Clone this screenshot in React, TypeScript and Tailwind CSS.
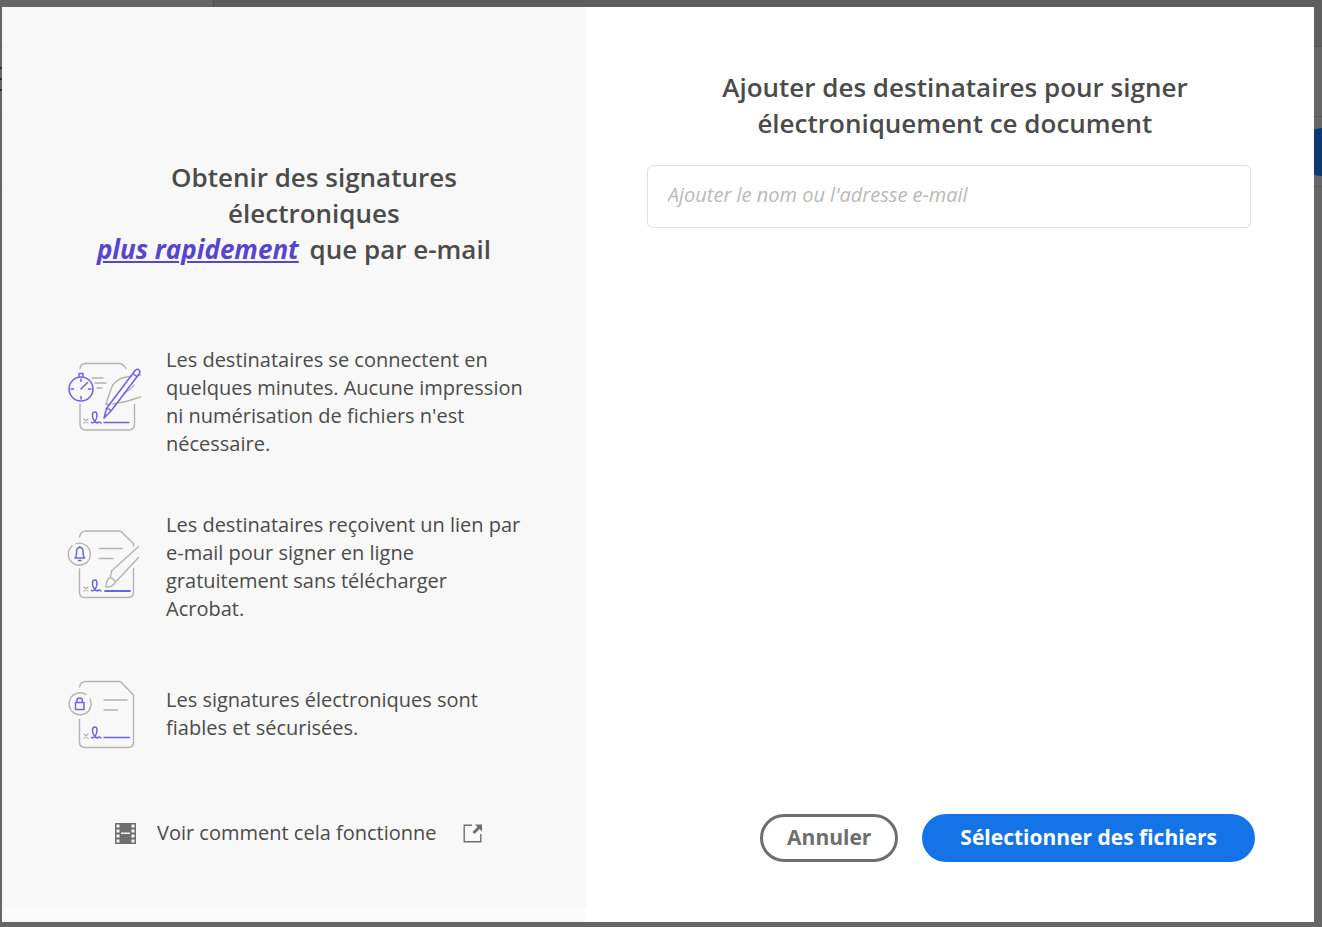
import React, { useState } from 'react'

const GRAY = '#b3b3b3'
const VIOLET = '#6a64e0'

function Signature() {
  return (
    <>
      <path d="M24 69l4 4M28 69l-4 4" stroke={GRAY} strokeWidth="1.200" />
      <path
        d="M31.500 72.500c3 1 5.500-3 5.500-7.500 0-4-4-4-4.500-.5-.5 3.500 2 8 5 8.500 1-1.500 2-1 3.500 0"
        stroke={VIOLET}
        strokeWidth="1.500"
      />
    </>
  )
}

function FastIcon() {
  return (
    <svg viewBox="4 14 80 76" className="h-[76px] w-20 shrink-0 overflow-visible" fill="none" strokeLinecap="round" strokeLinejoin="round" aria-hidden="true">
      <g stroke={GRAY} strokeWidth="1.400">
        <path d="M20 18.500q.5-5 6-5h33q4 0 7 5" />
        <path d="M20 54v20q0 6 6 6h42.500q6 0 6-6V54.500" />
        <path d="M32 28h11M35 33h11M37 38h5" />
        <path d="M46 54l5-15q3-8 11-11l10-2" />
        <path d="M46 54q2 1 3 0M53 54l13-2.500L80.500 47" />
        <path d="M64 43q7-3 10-8M77 25.500l3.500-.5" />
      </g>
      <g stroke={VIOLET} strokeWidth="1.500">
        <circle cx="21" cy="39" r="12" />
        <path d="M19 26.500v-3h4v3M21 29v2.500M21 46.500V49M11 39h2.500M28.500 39H31M21 39l6.500-6.500" />
        <path d="M46.500 58.500L75.500 20q2-1.500 3.500 0t.5 3.500L51 61l-7 7zM73.500 24l2.500 2M46.500 58.500q3 0 4.500 2.500" />
        <path d="M44 72.500h25" />
      </g>
      <Signature />
    </svg>
  )
}

function BellIcon() {
  return (
    <svg viewBox="4 9 80 76" className="h-[76px] w-20 shrink-0 overflow-visible" fill="none" strokeLinecap="round" strokeLinejoin="round" aria-hidden="true">
      <g stroke={GRAY} strokeWidth="1.400">
        <path d="M19.500 17q1-6 7-6h34L73.500 23.500V26" />
        <path d="M19.500 49v23q0 5.500 5.500 5.500h43q5.500 0 5.500-5.500V48.500" />
        <path d="M39 28.500h23M39 38.500h14" />
        <path d="M12 26A11 11 0 1 0 16 23.700" />
        <path d="M51.500 51L78.500 26.500M57.500 60L78.500 37.500" />
        <path d="M51.500 51l-1 6 5 4.500 2-1.500M50.500 57.500q-4 1-4.500 9.500 8 0 9.500-5.500" />
      </g>
      <g stroke={VIOLET} strokeWidth="1.500">
        <path d="M15 38q1.500-1.500 1.500-5v-1.500q0-4 3.300-4t3.300 4V33q0 3.500 1.500 5zM18.500 40.500h2.500M19.800 26.500v1" />
        <path d="M45 71h25" strokeWidth="1.800" />
      </g>
      <g transform="translate(0 -2)">
        <Signature />
      </g>
    </svg>
  )
}

function SecureIcon() {
  return (
    <svg viewBox="4 6 80 76" className="h-[76px] w-20 shrink-0 overflow-visible" fill="none" strokeLinecap="round" strokeLinejoin="round" aria-hidden="true">
      <g stroke={GRAY} strokeWidth="1.400">
        <path d="M19.500 17q1-5.500 7-5.500h34L73.500 25v47q0 5.500-5.500 5.500H25q-5.500 0-5.500-5.500V49.500" />
        <path d="M44 30h23M44 40h13.500" />
        <path d="M26 24.500A11 11 0 1 0 30 29" />
      </g>
      <g stroke={VIOLET} strokeWidth="1.500">
        <path d="M15.500 32.500h8.500v7h-8.500zM17 32.500v-2q0-2.500 2.700-2.500t2.700 2.500v2" />
        <path d="M44 67.500h25.500" />
      </g>
      <g transform="translate(0 -5)">
        <Signature />
      </g>
    </svg>
  )
}

function FilmIcon() {
  return (
    <svg viewBox="0 0 21 21" className="size-[21px] shrink-0" aria-hidden="true">
      <path d="M0 0h21v21H0z" fill="#6e6e6e" />
      <path
        d="M1.500 1.500h3v3h-3zM1.500 6.500h3v3h-3zM1.500 11.500h3v3h-3zM1.500 16.500h3v3h-3zM16.500 1.500h3v3h-3zM16.500 6.500h3v3h-3zM16.500 11.500h3v3h-3zM16.500 16.500h3v3h-3zM6 9.500h9V11H6z"
        fill="#f8f8f8"
      />
    </svg>
  )
}

function ExternalIcon() {
  return (
    <svg viewBox="0 0 19 19" className="size-[19px] shrink-0" fill="none" aria-hidden="true">
      <path d="M9 1.200H1.200v16.600h16.600V10" stroke="#6e6e6e" strokeWidth="1.400" />
      <path d="M12 .5h7v7l-2.500-2.500-5 5-2-2 5-5z" fill="#6e6e6e" />
    </svg>
  )
}

const benefits = [
  {
    icon: <FastIcon />,
    text: "Les destinataires se connectent en quelques minutes. Aucune impression ni numérisation de fichiers n'est nécessaire.",
  },
  {
    icon: <BellIcon />,
    text: 'Les destinataires reçoivent un lien par e-mail pour signer en ligne gratuitement sans télécharger Acrobat.',
  },
  {
    icon: <SecureIcon />,
    text: 'Les signatures électroniques sont fiables et sécurisées.',
  },
]

// Dimmed page that stays visible around the dialog
function PageBehind() {
  return (
    <div className="flex min-h-screen flex-col bg-[#666666]" aria-hidden="true">
      <div className="flex h-[47px] border-b border-[#585858]">
        <div className="w-[214px] border-r border-[#505050]" />
        <div className="flex-1 bg-[#5e5e5e]" />
      </div>
      <div className="flex h-[70px] flex-col gap-[9px] border-b border-[#585858] pt-5">
        <div className="h-[2px] w-5 bg-[#2c2c2c]" />
        <div className="h-[2px] w-5 bg-[#2c2c2c]" />
        <div className="h-[2px] w-5 bg-[#2c2c2c]" />
      </div>
      <div className="flex h-[70px] items-center justify-end border-b border-[#585858]">
        <div className="h-12 w-5 rounded-l-full bg-[#0d3871]" />
      </div>
    </div>
  )
}

function App() {
  const [recipient, setRecipient] = useState('')

  return (
    <div className="relative font-['Open_Sans','Noto_Sans',sans-serif] text-[#4b4b4b]">
      <PageBehind />

      <div className="absolute inset-0 flex pt-[7px] pr-2 pb-[5px] pl-[2px]">
        <div role="dialog" aria-label="Obtenir des signatures" className="grid flex-1 grid-cols-[89fr_111fr] bg-white">
          {/* Benefits */}
          <div className="flex flex-col border-b-[15px] border-[#fbfbfb] bg-[#f8f8f8] pt-[152px]">
            <h2 className="text-center text-[26px] leading-9 font-semibold">
              <span className="block pl-10">
                Obtenir des signatures
                <br />
                électroniques
              </span>
              <a href="#rapide" className="mr-1 font-bold text-[#5646cd] italic underline decoration-2 underline-offset-2">
                plus rapidement
              </a>{' '}
              que par e-mail
            </h2>

            <ul className="mt-[79px] flex flex-col gap-[53px] pr-14 pl-[62px]">
              {benefits.map((item) => (
                <li key={item.text} className="flex min-h-[76px] items-center gap-[22px]">
                  {item.icon}
                  <p className="text-[20px] leading-7">{item.text}</p>
                </li>
              ))}
            </ul>

            <a href="#demo" className="mt-[67px] ml-[113px] flex items-center text-[20px] leading-7">
              <FilmIcon />
              <span className="pr-[26px] pl-[21px]">Voir comment cela fonctionne</span>
              <ExternalIcon />
            </a>
          </div>

          {/* Recipients */}
          <div className="flex flex-col pt-[62px] pr-[59px] pb-[60px] pl-[61px]">
            <h1 className="pl-2 text-center text-[26px] leading-9 font-semibold">
              Ajouter des destinataires pour signer
              <br />
              électroniquement ce document
            </h1>
            <input
              type="email"
              aria-label="Nom ou adresse e-mail"
              placeholder="Ajouter le nom ou l'adresse e-mail"
              value={recipient}
              onChange={(e) => setRecipient(e.target.value)}
              className="mt-6 mr-1 h-[63px] rounded-md border border-[#dfdfdf] px-5 pb-1 text-[20px] placeholder:text-[#b9b9b9] placeholder:italic"
            />
            <div className="mt-auto flex justify-end gap-6 text-[21px] font-bold">
              <button className="h-12 rounded-full border-3 border-[#6e6e6e] px-6 text-[#6e6e6e]">Annuler</button>
              <button className="h-12 rounded-full bg-[#1473e6] px-[38px] text-white">Sélectionner des fichiers</button>
            </div>
          </div>
        </div>
      </div>
    </div>
  )
}

export default App
